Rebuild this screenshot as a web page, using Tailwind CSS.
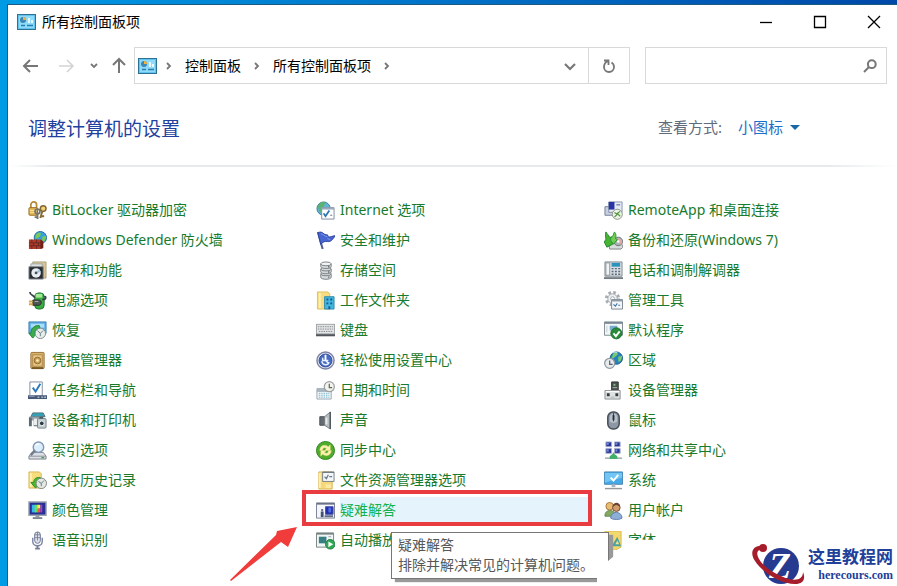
<!DOCTYPE html>
<html lang="zh-CN">
<head>
  <meta charset="UTF-8">
  <meta name="viewport" content="width=device-width, initial-scale=1.0">
  <title>所有控制面板项</title>
  <script src="https://cdn.jsdelivr.net/npm/@tailwindcss/browser@4"></script>
</head>
<body class="relative h-screen overflow-hidden bg-linear-to-r from-[#009be5] to-[#0048a8] pl-[7px] pt-1 font-['Noto_Sans','Noto_Sans_CJK_SC',sans-serif] text-sm select-none">
  <div class="flex h-full flex-col border-t border-l border-[#1c5a84] bg-white">
    <!-- Title bar -->
    <header class="flex h-[34px] shrink-0 items-center justify-between pl-[9px] pr-4">
      <div class="flex items-center gap-[6px]">
        <svg class="h-4 w-[19px]" viewBox="0 0 19 16"><rect x=".5" y=".5" width="18" height="15" fill="#62c4ee" stroke="#2d7195"/><path d="M2 2h15v12H2z" fill="#8edaf8"/><circle cx="6" cy="6" r="3" fill="#3a87b8"/><path d="M6 6V3a3 3 0 0 1 3 3z" fill="#f2b13c"/><path d="M11 4h2v5h-2zM14 6h2v3h-2z" fill="#e9faff"/><path d="M10 11.500h6M4 11.500h4" stroke="#237fb1" stroke-width="1.500"/></svg>
        <h1 class="text-black">所有控制面板项</h1>
      </div>
      <div class="flex items-center gap-10 text-black">
        <button aria-label="最小化"><svg class="size-[14px]" viewBox="0 0 14 14"><path d="M1 7.500h12" stroke="currentColor" stroke-width="1.300"/></svg></button>
        <button aria-label="最大化"><svg class="size-[14px]" viewBox="0 0 14 14"><path d="M1.500 1.500h11v11h-11z" fill="none" stroke="currentColor" stroke-width="1.300"/></svg></button>
        <button aria-label="关闭"><svg class="size-[14px]" viewBox="0 0 14 14"><path d="M1 1l12 12M13 1 1 13" stroke="currentColor" stroke-width="1.300"/></svg></button>
      </div>
    </header>

    <!-- Navigation -->
    <div class="flex h-[45px] shrink-0 items-center pt-[8px] pr-[10px] pl-[14px]">
      <div class="flex shrink-0 items-center text-[#777]">
        <button aria-label="后退"><svg class="size-[18px]" viewBox="0 0 18 18" fill="none" stroke="currentColor" stroke-width="2"><path d="M2 9h14M8 3 2 9l6 6"/></svg></button>
        <button class="ml-[17px] text-[#d3d3d3]" aria-label="前进"><svg class="size-[18px]" viewBox="0 0 18 18" fill="none" stroke="currentColor" stroke-width="1.500"><path d="M2 9h14M10 3l6 6-6 6"/></svg></button>
        <button class="ml-[15px]" aria-label="最近浏览的位置"><svg class="size-2" viewBox="0 0 8 8" fill="none" stroke="currentColor" stroke-width="1.800"><path d="m1 2 3 3 3-3"/></svg></button>
        <button class="ml-3" aria-label="上移"><svg class="size-[18px]" viewBox="0 0 18 18" fill="none" stroke="currentColor" stroke-width="2"><path d="M9 16V2M3 8l6-6 6 6"/></svg></button>
      </div>
      <nav class="ml-[6px] flex h-[37px] flex-1 items-center border border-[#d9d9d9] pl-[3px] text-black">
        <svg class="h-4 w-[19px]" viewBox="0 0 19 16"><rect x=".5" y=".5" width="18" height="15" fill="#62c4ee" stroke="#2d7195"/><path d="M2 2h15v12H2z" fill="#8edaf8"/><circle cx="6" cy="6" r="3" fill="#3a87b8"/><path d="M6 6V3a3 3 0 0 1 3 3z" fill="#f2b13c"/><path d="M11 4h2v5h-2zM14 6h2v3h-2z" fill="#e9faff"/><path d="M10 11.500h6M4 11.500h4" stroke="#237fb1" stroke-width="1.500"/></svg>
        <svg class="ml-2 size-2 text-[#777]" viewBox="0 0 8 8" fill="none" stroke="currentColor" stroke-width="1.800"><path d="m2 1 3 3-3 3"/></svg>
        <a href="#" class="ml-[12px]">控制面板</a>
        <svg class="ml-[12px] size-2 text-[#777]" viewBox="0 0 8 8" fill="none" stroke="currentColor" stroke-width="1.800"><path d="m2 1 3 3-3 3"/></svg>
        <a href="#" class="ml-[12px]">所有控制面板项</a>
        <svg class="ml-[12px] size-2 text-[#777]" viewBox="0 0 8 8" fill="none" stroke="currentColor" stroke-width="1.800"><path d="m2 1 3 3-3 3"/></svg>
        <button class="mr-3 ml-auto text-[#777]" aria-label="历史记录"><svg class="size-3" viewBox="0 0 12 12" fill="none" stroke="currentColor" stroke-width="2.200"><path d="m1 4 5 5 5-5"/></svg></button>
        <button class="flex h-full w-[41px] items-center justify-center border-l border-[#d9d9d9] text-[#777]" aria-label="刷新"><svg class="size-[14px]" viewBox="0 0 14 14" fill="none" stroke="currentColor" stroke-width="1.800"><path d="M2 1.500h4.500V6M6.300 2C3.500 3 2 5 2 8a5 5 0 0 0 10 0c0-2-1-3.600-2.500-4.500"/></svg></button>
      </nav>
      <div class="ml-[15px] flex h-[37px] w-[28%] items-center border border-[#d9d9d9] pr-[9px]">
        <input type="search" aria-label="搜索控制面板" class="h-full min-w-0 flex-1 px-2 outline-none">
        <svg class="size-[14px] text-[#777]" viewBox="0 0 14 14" fill="none" stroke="currentColor" stroke-width="2"><circle cx="8.800" cy="5.200" r="3.900"/><path d="M6 8 1 13"/></svg>
      </div>
    </div>

    <!-- Heading -->
    <div class="flex h-[81px] shrink-0 items-center justify-between pt-[7px] pr-[97px] pl-5">
      <h2 class="pt-1 text-[19px] text-[#1f429f]">调整计算机的设置</h2>
      <div class="flex items-center text-[15px] text-[#5f6b7c]">
        <label for="view">查看方式:</label>
        <div class="ml-4 flex items-center text-[#1b6fc8]">
          <select id="view" class="appearance-none bg-transparent outline-none">
            <option>小图标</option>
          </select>
          <svg class="ml-[6px] h-[5px] w-[10px]" viewBox="0 0 10 5"><path d="M0 0h10L5 5z" fill="#1667a8"/></svg>
        </div>
      </div>
    </div>
    <hr class="h-[2px] shrink-0 border-0 bg-[linear-gradient(to_right,#fff,#e6eaec_5%,#e6eaec_92%,#fff)]">

    <!-- Items -->
    <main class="grid grid-cols-3 pt-[28px] pr-[5px] pl-5 whitespace-nowrap text-[#187a2c]">
      <ul class="[&_a]:flex [&_a]:h-[30px] [&_a]:items-center [&_a]:gap-[5px] [&_svg]:size-[19px] [&_svg]:shrink-0">
        <li><a href="#">
          <svg viewBox="0 0 20 20"><path d="M3 8V4a3 3 0 0 1 6 0v4" fill="none" stroke="#b68a33" stroke-width="1.800"/><rect x="1" y="7" width="9" height="8" rx="1" fill="#e5b750" stroke="#966a24"/><path d="M2 10h7M2 12h7" stroke="#fae19a"/><circle cx="10" cy="11" r="2.500" fill="none" stroke="#77766e" stroke-width="2"/><path d="M10 13v6M10 17h-3" stroke="#77766e" stroke-width="2"/><circle cx="16" cy="8" r="3" fill="#f1d27a" stroke="#80652f" stroke-width="1.500"/><path d="m15 11-2 7M14 16h3" stroke="#8b6c30" stroke-width="2"/></svg>
          <span>BitLocker 驱动器加密</span></a></li>
        <li><a href="#">
          <svg viewBox="0 0 20 20"><circle cx="13" cy="7" r="6.500" fill="#37a0d9" stroke="#236c9d"/><path d="M9 3c4-3 6 0 3 3s-5 2-4 0zM15 6l4-1c0 4-2 7-4 7z" fill="#7acb55"/><path d="M1 9h12l3 2v7l-3 1H1z" fill="#b33a2b"/><path d="M1 12.500h12M1 15.500h12M4 9v3.500M9 9v3.500M6 12.500v3M11 12.500v3M4 15.500V19M9 15.500V19" stroke="#662a22"/><path d="m13 9 3 2v7l-3 1z" fill="#6c2219"/></svg>
          <span>Windows Defender 防火墙</span></a></li>
        <li><a href="#">
          <svg viewBox="0 0 20 20"><path d="M5 1h14v17H5z" fill="#d8c391" stroke="#aaa385"/><path d="M3 3h12v5H3z" fill="#dfe2e1" stroke="#a1a5a5"/><path d="M1 6h15v13H1z" fill="#272c34" stroke="#858a8e"/><circle cx="8.500" cy="12.500" r="5" fill="#e8edf1"/><path d="m8.500 12.500 3-4 2 3z" fill="#9ec7dc"/><circle cx="8.500" cy="12.500" r="1.500" fill="#47515b"/></svg>
          <span>程序和功能</span></a></li>
        <li><a href="#">
          <svg viewBox="0 0 20 20"><rect x="7" y="2" width="10" height="17" rx="4" fill="#39ad3d" stroke="#1d6d31"/><path d="M8 3h7v4H8z" fill="#a3e798"/><path d="M2 1c0 4 4 3 5 6M15 9c5 0 4-4 2-3" fill="none" stroke="#384149" stroke-width="1.800"/><path d="M5 9.500h6c4 0 4 5.500 0 5.500H5z" fill="#4f5756" stroke="#252d2f"/><path d="M1 11h4M1 14h4" stroke="#d5a541" stroke-width="2"/><path d="M7 11h4" stroke="#b0b7b3"/></svg>
          <span>电源选项</span></a></li>
        <li><a href="#">
          <svg viewBox="0 0 20 20"><path d="M1 1h18v12H1z" fill="#63b6ed" stroke="#367dab"/><path d="M3 3h14v4H3z" fill="#acdcf8"/><path d="M12 5c-5-1-9 3-9 8H1l4 5 4-5H7c0-3 2-5 6-4z" fill="#38ae4a" stroke="#23843c"/><circle cx="13" cy="13" r="5.500" fill="#e7ece9" stroke="#7b8b8b"/><path d="m10 10 3 3 3-3M13 13v3" fill="none" stroke="#667c85"/></svg>
          <span>恢复</span></a></li>
        <li><a href="#">
          <svg viewBox="0 0 20 20"><rect x="3" y="1.500" width="14" height="17" rx="1" fill="#d9b36b" stroke="#987137"/><rect x="5" y="4" width="10" height="12" fill="#e4c586" stroke="#af8749"/><circle cx="10" cy="10" r="3.500" fill="#c99f55" stroke="#946b31"/><circle cx="10" cy="10" r="1.300" fill="#fff2c5"/><path d="M4 18h12" stroke="#775625" stroke-width="2"/></svg>
          <span>凭据管理器</span></a></li>
        <li><a href="#">
          <svg viewBox="0 0 20 20"><path d="M2 1h13v15H2z" fill="#fff" stroke="#7e8ba0"/><path d="m5 7 3 4 5-8" fill="none" stroke="#2c77bd" stroke-width="2"/><path d="M0 15h20v4H0z" fill="#465875"/><path d="M1 16h6" stroke="#9baec7"/><path d="M10 17h2M14 17h2M17 17h2" stroke="#e6eff7"/></svg>
          <span>任务栏和导航</span></a></li>
        <li><a href="#">
          <svg viewBox="0 0 20 20"><path d="M5 2h11l2 4H3z" fill="#37a0b9" stroke="#52717c"/><path d="M1 6h14v4H1z" fill="#929da4"/><path d="M1 7h3v9H1zM6 9h7v7H6z" fill="#5c6970"/><path d="M6 8h4v7H6z" fill="#e9eff0"/><rect x="10" y="8" width="9" height="10" rx="1" fill="#c5ced0" stroke="#77838a"/><circle cx="14.500" cy="13" r="2.500" fill="#303b46" stroke="#f2f5f5"/><path d="M12 7h4" stroke="#4a5960" stroke-width="2"/></svg>
          <span>设备和打印机</span></a></li>
        <li><a href="#">
          <svg viewBox="0 0 20 20"><path d="m4 12-3 4v3h18v-3l-3-4z" fill="#dce0e5" stroke="#7a828c"/><path d="M1 16h18" stroke="#8a9198"/><path d="M14 17.500h3" stroke="#46a258" stroke-width="1.500"/><circle cx="11" cy="6.500" r="5.500" fill="#dceefc" stroke="#8297b3" stroke-width="1.500"/><path d="M8 5c1-2 3-2 4-2" fill="none" stroke="#fff" stroke-width="1.500"/><path d="m7 10-4 5" stroke="#727c8b" stroke-width="2.500"/></svg>
          <span>索引选项</span></a></li>
        <li><a href="#">
          <svg viewBox="0 0 20 20"><path d="M1 1h11l2 2v15H1z" fill="#f5dd7d" stroke="#d9b755"/><path d="M3 2v15" stroke="#fff0ad" stroke-width="2"/><path d="M13 7c-5-1-7 2-7 5H3l5 6 4-5H9c0-2 1-3 4-2z" fill="#49b82f" stroke="#278c28"/><circle cx="14" cy="13" r="5.500" fill="#e4e8e5" stroke="#79847f"/><path d="m11 11 3 2 3-3M14 13v3" fill="none" stroke="#65777b"/></svg>
          <span>文件历史记录</span></a></li>
        <li><a href="#">
          <svg viewBox="0 0 20 20"><path d="M1 1h18v14H1z" fill="#252f96" stroke="#9ba3b0" stroke-width="1.500"/><path d="M4 4h4v8H4z" fill="#36b8ed"/><path d="M7 4h4v8H7z" fill="#65df63"/><path d="M10 4h3v4h-3z" fill="#ffec4f"/><path d="M10 8h3v4h-3z" fill="#ee5549"/><path d="M13 4h2v8h-2z" fill="#a443c7"/><path d="M8 15h4v2H8z" fill="#939ba2"/><path d="M5 18h10" stroke="#7b858d" stroke-width="2"/></svg>
          <span>颜色管理</span></a></li>
        <li><a href="#">
          <svg viewBox="0 0 20 20"><rect x="7" y="1" width="6" height="12" rx="3" fill="#dce1ec" stroke="#6d7590"/><path d="M7 4h6M7 7h6M10 1v9" stroke="#7b839c"/><path d="M5 7v4c0 6 10 6 10 0V7" fill="none" stroke="#7d86a3" stroke-width="1.500"/><path d="M10 15v4M7.500 18.500h5" stroke="#747c96" stroke-width="2"/></svg>
          <span>语音识别</span></a></li>
      </ul>

      <ul class="[&_a]:flex [&_a]:h-[30px] [&_a]:items-center [&_a]:gap-[5px] [&_svg]:size-[19px] [&_svg]:shrink-0">
        <li><a href="#">
          <svg viewBox="0 0 20 20"><circle cx="8" cy="8" r="7" fill="#61b4d5" stroke="#397b9b"/><path d="M2 6c1-5 6-6 8-4L8 6l-3 1 2 4-3 1z" fill="#5bb275"/><path d="M6 7h13v12H6z" fill="#fff" stroke="#7e8aa0"/><path d="M6 8h13" stroke="#9ba8bd" stroke-width="2"/><path d="m8 13 2 3 4-6" fill="none" stroke="#2873b2" stroke-width="1.800"/><path d="M15 15h2" stroke="#5c7085"/></svg>
          <span>Internet 选项</span></a></li>
        <li><a href="#">
          <svg viewBox="0 0 20 20"><path d="m2 1 5 18" stroke="#4f6397" stroke-width="2.200"/><path d="M2 2c5-3 6 3 10 2l1 2c2 1 4-1 7-1-2 4-5 7-8 6-3 0-4 0-7 3z" fill="#4866d0" stroke="#2a42a0"/><path d="M5 3c3 0 4 3 7 3M12 8l3 1" fill="none" stroke="#829bed"/></svg>
          <span>安全和维护</span></a></li>
        <li><a href="#">
          <svg viewBox="0 0 20 20"><g fill="#d5d9dc" stroke="#7b8185"><path d="M5 14v3c0 3 11 3 11 0v-3z"/><ellipse cx="10.500" cy="13.500" rx="5.500" ry="2"/><path d="M5 8.500v3c0 2.500 11 2.500 11 0v-3z"/><ellipse cx="10.500" cy="8.500" rx="5.500" ry="2"/><path d="M5 3v3c0 2.500 11 2.500 11 0V3z"/><ellipse cx="10.500" cy="3" rx="5.500" ry="2" fill="#f2f4f4"/></g><path d="M13 6h1M13 11.500h1M13 17h1" stroke="#303a40" stroke-width="1.500"/></svg>
          <span>存储空间</span></a></li>
        <li><a href="#">
          <svg viewBox="0 0 20 20"><path d="M1.500 1h11l2 2v16h-13z" fill="#f6dc83" stroke="#e1bf5c"/><path d="M4 2v16" stroke="#fff0b4" stroke-width="2"/><path d="M9 6h10v13H9z" fill="#42b6dd" stroke="#318bae"/><path d="M11 8h2v2h-2zM15 8h2v2h-2zM11 12h2v2h-2zM15 12h2v2h-2zM13 16h2v3h-2z" fill="#175b91"/></svg>
          <span>工作文件夹</span></a></li>
        <li><a href="#">
          <svg viewBox="0 0 20 20"><path d="M0 3h20v13H0z" fill="#a1a4a6"/><path d="M1 4h18v9H1z" fill="#e2e4e5"/><path d="M2 6h16M2 8.500h16M3 11h14" stroke="#85898d" stroke-dasharray="1.500 1"/><path d="M0 15h20" stroke="#51565b" stroke-width="2"/></svg>
          <span>键盘</span></a></li>
        <li><a href="#">
          <svg viewBox="0 0 20 20"><circle cx="10" cy="10" r="9" fill="#e0e5f1" stroke="#7b83a3" stroke-width="1.500"/><circle cx="10" cy="10" r="6.800" fill="#466bc5" stroke="#354c96"/><path d="M10 4v6" stroke="#fff" stroke-width="2"/><path d="M7 7v3h6M10 10l3 3M6 11c1 4 6 5 8 1" fill="none" stroke="#e7f0ff" stroke-width="1.500"/></svg>
          <span>轻松使用设置中心</span></a></li>
        <li><a href="#">
          <svg viewBox="0 0 20 20"><path d="M1 8h15v11H1z" fill="#f1f5f7" stroke="#99a8b5"/><path d="M1 10h15" stroke="#a5b4be" stroke-width="3"/><path d="M3 13h11M3 15h11M3 17h11" stroke="#74b5c9" stroke-dasharray="1.500 1"/><circle cx="14" cy="6" r="5.300" fill="#f5f4ea" stroke="#9ba1a3" stroke-width="1.300"/><path d="M14 3v4h3" fill="none" stroke="#59666d" stroke-width="1.300"/></svg>
          <span>日期和时间</span></a></li>
        <li><a href="#">
          <svg viewBox="0 0 20 20"><path d="M4 6h5v9H4z" fill="#656b70" stroke="#494f54"/><path d="m9 6 6-5v18l-6-4z" fill="#b9bdc0" stroke="#777d82"/><path d="M11 7v7" stroke="#e8ebec" stroke-width="2"/><path d="M15 1v18" stroke="#50585f" stroke-width="1.500"/></svg>
          <span>声音</span></a></li>
        <li><a href="#">
          <svg viewBox="0 0 20 20"><circle cx="10" cy="10" r="9.500" fill="#50ad2b" stroke="#2e841f"/><path d="M4 10c0-5 5-7 9-4l2-2v6H9l2-2C8 6 7 8 7 10zM16 10c0 5-5 7-9 4l-2 2v-6h6l-2 2c3 2 4 0 4-2z" fill="#fff0b0" stroke="#dbd77b" stroke-width=".5"/></svg>
          <span>同步中心</span></a></li>
        <li><a href="#">
          <svg viewBox="0 0 20 20"><path d="M3 1h14v18H3z" fill="#f5d87c" stroke="#d8b14d"/><path d="M4 2v16" stroke="#fff0b2" stroke-width="2"/><path d="M7 1h12v10H7z" fill="#f5f7f7" stroke="#777f85"/><path d="M7 1.500h12" stroke="#66717a"/><path d="m9 6 2 2 2-4M14 6h3" fill="none" stroke="#657b91" stroke-width="1.300"/><path d="M10 14h6v4h-6z" fill="#ffe9a0"/></svg>
          <span>文件资源管理器选项</span></a></li>
        <li class="relative">
          <a href="#" class="text-[#13b14a]" aria-describedby="tip">
            <svg viewBox="0 0 20 20"><path d="M.5 2h19v16H.5z" fill="#f4f6fb" stroke="#777d90"/><path d="M1 3h18" stroke="#59637c" stroke-width="1.500"/><path d="M10 6h8v8h-8z" fill="#222fac" stroke="#4a55a5"/><path d="M13 7h3v5h-3z" fill="#536be4"/><path d="M9 16h9" stroke="#626e8a" stroke-width="2"/><path d="M5 11h3v6H5z" fill="#435174"/><circle cx="6.500" cy="9.500" r="1.200" fill="#4f5d80"/></svg>
            <span class="mr-4 flex h-[26px] flex-1 items-center bg-[#e5f3fd]">疑难解答</span></a>
          <!-- Callout frame and arrow -->
          <div class="pointer-events-none absolute -top-[5px] -left-[14px] z-10 h-9 w-[290px] border-4 border-[#e83c40]"></div>
          <svg class="pointer-events-none absolute top-8 right-full z-10 mr-[18px] h-[54px]! w-[68px]!" viewBox="0 0 68 54"><path d="M67 0 58 20l-7-5L1 54l-1-1L46 8l1-4z" fill="#f03c3a"/></svg>
          <div id="tip" role="tooltip" class="absolute top-[37px] left-[75px] z-10 h-[47px] w-[218px] border border-[#767676] bg-white py-[2px] pl-[6px] leading-5 text-[#575757] shadow-[4px_3px_1px_#999]">
            <p>疑难解答</p>
            <p>排除并解决常见的计算机问题。</p>
          </div>
        </li>
        <li><a href="#">
          <svg viewBox="0 0 20 20"><path d="M.5 2h18v15H.5z" fill="#f3f6f7" stroke="#76827f"/><path d="M1 3h17" stroke="#697874" stroke-width="1.500"/><path d="M3 6h8v7H3z" fill="#387f84"/><path d="M13 6h3M13 9h3M13 12h3" stroke="#99a5aa"/><circle cx="15" cy="14" r="5" fill="#2eaa55" stroke="#257d42"/><path d="m13 11 5 3-5 3z" fill="#fff"/></svg>
          <span>自动播放</span></a></li>
      </ul>

      <ul class="[&_a]:flex [&_a]:h-[30px] [&_a]:items-center [&_a]:gap-[5px] [&_svg]:size-[19px] [&_svg]:shrink-0">
        <li><a href="#">
          <svg viewBox="0 0 20 20"><path d="M1 6h10v9H1z" fill="#c9d0df" stroke="#737d99"/><path d="M5 1h14v11H5z" fill="#e5eaf3" stroke="#8490ad"/><path d="M5 1h6v8H5z" fill="#2834a2"/><path d="M13 4h4" stroke="#7689b2" stroke-width="1.500"/><circle cx="14" cy="14" r="5.300" fill="#edf3e8" stroke="#8b9688"/><path d="m11 12 3 2-3 3M17 11l-3 2 3 3" fill="none" stroke="#569945" stroke-width="1.300"/></svg>
          <span>RemoteApp 和桌面连接</span></a></li>
        <li><a href="#">
          <svg viewBox="0 0 20 20"><path d="m5 14 4-2h9l2 5-2 2H6z" fill="#d7dcdc" stroke="#79817f"/><circle cx="15" cy="11" r="4.500" fill="#aab2b4" stroke="#687175"/><path d="m15 7 4 3-1 5-3-4z" fill="#e2aaa6"/><circle cx="15" cy="11" r="1.300" fill="#fff"/><path d="M2 1c1 2 3 3 4 6l2-1 1 8-6 3-3-6 2-1c0-3-1-5 0-9z" fill="#46b536" stroke="#218728"/><path d="M11 1c2 2 2 5 1 7l2 1-4 5-3-4V7l2-1z" fill="#70cd55" stroke="#2a9632"/></svg>
          <span>备份和还原(Windows 7)</span></a></li>
        <li><a href="#">
          <svg viewBox="0 0 20 20"><path d="M1 1h18v15H1z" fill="#d7dde2" stroke="#7e888f"/><path d="M2 2h4v13H2z" fill="#f2f4f5" stroke="#8e979d"/><path d="M8 2h9v4H8z" fill="#2c94bb"/><path d="M8 8h9M8 11h9M8 14h9" stroke="#596a78" stroke-width="1.500" stroke-dasharray="2 1.500"/><path d="M0 17h20v2H0z" fill="#737c82"/></svg>
          <span>电话和调制解调器</span></a></li>
        <li><a href="#">
          <svg viewBox="0 0 20 20"><circle cx="9" cy="8" r="6.500" fill="none" stroke="#a5abb0" stroke-width="3" stroke-dasharray="2.700 2.400"/><circle cx="9" cy="8" r="5" fill="#eef0f1" stroke="#a3aab0"/><circle cx="9" cy="8" r="2" fill="#fff" stroke="#a3aab0"/><path d="M8 9h11.500v10H8z" fill="#f4f6f8" stroke="#7c8690"/><path d="M8 10h11.500" stroke="#8c9aaa" stroke-width="2"/><path d="m10 14 2 2 2-3M15 15h2" fill="none" stroke="#3c76aa" stroke-width="1.200"/></svg>
          <span>管理工具</span></a></li>
        <li><a href="#">
          <svg viewBox="0 0 20 20"><path d="M.5 1h19v14H.5z" fill="#f4f7f8" stroke="#7d8990"/><path d="M1 2h18" stroke="#798894" stroke-width="2"/><path d="M6 5h8v5H6z" fill="#77adcf"/><path d="M3 5v7" stroke="#c1ccd2"/><circle cx="13" cy="13" r="5.800" fill="#278b39" stroke="#1d6a2c"/><path d="m10 13 2.500 3 4-5" fill="none" stroke="#fff" stroke-width="2"/></svg>
          <span>默认程序</span></a></li>
        <li><a href="#">
          <svg viewBox="0 0 20 20"><circle cx="13" cy="7.500" r="6.500" fill="#2681be" stroke="#1b5c91"/><path d="M10 2c4-2 6 1 3 3s-3 4-5 2zM15 6l4-1c0 4-2 7-4 6z" fill="#77c96e"/><path d="M9 2c2-1 3-1 5 0" stroke="#b8e3fa" fill="none"/><circle cx="6" cy="13" r="5.300" fill="#e7ebee" stroke="#8d98a0" stroke-width="1.300"/><path d="M6 10v4h3" fill="none" stroke="#56636e" stroke-width="1.300"/></svg>
          <span>区域</span></a></li>
        <li><a href="#">
          <svg viewBox="0 0 20 20"><path d="M8 1h7v10H8z" fill="#49504e" stroke="#303635"/><path d="M10 3h2v2h-2z" fill="#80c487"/><path d="M9 7h5" stroke="#aab5b0"/><path d="M1 10h16v9H1z" fill="#dfe2e2" stroke="#8b9191"/><path d="M2 11h14" stroke="#fff"/><path d="M3 13h3v3H3zM12 13h3v3h-3z" fill="#353c3c"/><path d="M7 17h4" stroke="#abb1b2"/></svg>
          <span>设备管理器</span></a></li>
        <li><a href="#">
          <svg viewBox="0 0 20 20"><rect x="4" y="1" width="12" height="18" rx="5.500" fill="#8e98a4" stroke="#454e59" stroke-width="1.600"/><path d="M6 7c0-6 8-6 8 0v4c-2 2-6 2-8 0z" fill="#b8c1cb"/><path d="M10 2v9" stroke="#3f4854"/><rect x="9" y="4" width="2" height="6" rx="1" fill="#28313c"/></svg>
          <span>鼠标</span></a></li>
        <li><a href="#">
          <svg viewBox="0 0 20 20"><g fill="#2b3796" stroke="#a7b0cf"><path d="M2 1h6v5H2zM11 1h6v5h-6zM2 8h6v5H2zM11 8h6v5h-6z"/></g><path d="M3 2h2v2H3zM12 2h2v2h-2zM3 9h2v2H3zM12 9h2v2h-2z" fill="#7b8fe4"/><path d="M10 12v5M1 18h18" stroke="#8d9f96" stroke-width="1.500"/><path d="m10 13 4 3v3H6v-3z" fill="#41ae6d"/></svg>
          <span>网络和共享中心</span></a></li>
        <li><a href="#">
          <svg viewBox="0 0 20 20"><path d="M.5 1h19v13H.5z" fill="#45a8e7" stroke="#4a88b4"/><path d="M1 2h18v5L1 12z" fill="#73c5f3"/><path d="m7 7 3 3 5-6" fill="none" stroke="#fff" stroke-width="2"/><path d="M8 14h4v3H8z" fill="#aab6be"/><path d="M1 18.500h18" stroke="#929aa0" stroke-width="1.500"/></svg>
          <span>系统</span></a></li>
        <li><a href="#">
          <svg viewBox="0 0 20 20"><path d="M1 15c0-6 9-7 11-1v2H1z" fill="#81a963" stroke="#65864f"/><circle cx="6" cy="5.500" r="4" fill="#e7bd76" stroke="#a97635"/><circle cx="13" cy="7" r="4" fill="#d49c6b" stroke="#6d4932"/><path d="M9 6c1-6 8-5 8 0l-4-2z" fill="#694330"/><path d="M7 18c0-8 12-8 12 0-2 2-10 2-12 0z" fill="#8daed7" stroke="#617fae"/></svg>
          <span>用户帐户</span></a></li>
        <li><a href="#">
          <svg viewBox="0 0 20 20"><path d="M1 0h17v17l-6 3H1z" fill="#f2d86d" stroke="#d8b950"/><path d="M3 1v16" stroke="#fff0a9" stroke-width="2"/><path d="m8 16 6-10 4 10z" fill="#4ba1a0"/><path d="m12 14 2-4 2 4z" fill="#f2e28e"/></svg>
          <span>字体</span></a></li>
      </ul>
    </main>
  </div>

  <!-- Site mark -->
  <div class="absolute right-0 bottom-0 z-20 flex h-[46px] w-[300px] items-center justify-end bg-white pr-1 [clip-path:polygon(0_30px,22px_12px,28px_0,100%_0,100%_100%,0_100%)]">
    <svg class="h-[46px] w-[58px]" viewBox="0 0 58 46"><circle cx="32" cy="26" r="18" fill="#263a8f"/><text x="31" y="38" text-anchor="middle" fill="#fff" class="font-['Liberation_Serif',serif] text-[36px] font-bold italic">Z</text><path d="M16 6C4 4 0 12 6 21c9 13 26 23 40 23 8 0 11-5 8-12 0 7-6 9-14 7C26 35 13 26 9 17 7 12 9 9 14 10z" fill="#a51c2b"/><circle cx="14" cy="8" r="4" fill="#a51c2b"/></svg>
    <div class="ml-[1px] pt-[3px] text-[#20409a]">
      <p class="text-[17px] leading-5 font-bold">这里教程网</p>
      <p class="text-right font-['Liberation_Serif',serif] text-xs leading-4 font-bold">herecours.com</p>
    </div>
  </div>
</body>
</html>
